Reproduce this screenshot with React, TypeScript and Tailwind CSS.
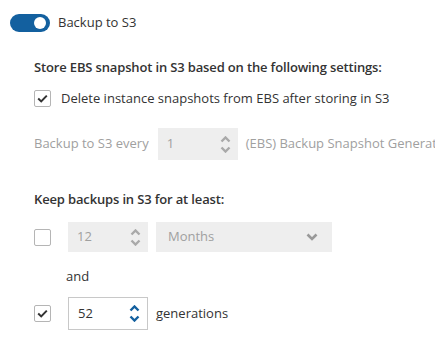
import React from 'react';

const Chevron = ({ dir, className = '' }: { dir: 'up' | 'down'; className?: string }) => (
  <svg width="11" height="7" viewBox="0 0 11 7" className={className} fill="none">
    {dir === 'up' ? (
      <path d="M1.5 5.5 L5.5 1.5 L9.5 5.5" stroke="currentColor" strokeWidth="2.4" />
    ) : (
      <path d="M1.5 1.5 L5.5 5.5 L9.5 1.5" stroke="currentColor" strokeWidth="2.4" />
    )}
  </svg>
);

const Checkbox = ({ checked }: { checked: boolean }) => (
  <div className="w-[17px] h-[17px] border border-[#b5b5b5] rounded-[2px] bg-white flex items-center justify-center flex-shrink-0">
    {checked && (
      <svg width="11" height="9" viewBox="0 0 11 9" fill="none">
        <path d="M1.2 4.6 L4.2 7.4 L9.8 1.6" stroke="#333" strokeWidth="2" />
      </svg>
    )}
  </div>
);

const NumberBox = ({
  value,
  disabled,
  className = '',
}: {
  value: string;
  disabled?: boolean;
  className?: string;
}) => (
  <div
    className={`w-[80px] flex-shrink-0 flex items-center justify-between pl-[9px] pr-[7px] ${
      disabled ? 'bg-[#eeeeee] text-[#a0a0a0]' : 'bg-white border border-[#c8c8c8] text-[#333]'
    } ${className}`}
  >
    <span>{value}</span>
    <div className={`flex flex-col gap-[3px] ${disabled ? 'text-[#a9a9a9]' : 'text-[#13609f]'}`}>
      <Chevron dir="up" />
      <Chevron dir="down" />
    </div>
  </div>
);

export default function App() {
  return (
    <div className="pl-[10px] pt-[14px] text-[13px] text-[#333] font-['Open_Sans',sans-serif] bg-white w-[435px] h-[343px] overflow-hidden">
      <div className="flex items-center h-[18px]">
        <div className="w-[40px] h-[18px] rounded-full bg-[#13609f] flex items-center justify-end pr-[4px]">
          <div className="w-[12px] h-[12px] rounded-full bg-white" />
        </div>
        <span className="ml-[8px]">Backup to S3</span>
      </div>

      <div className="pl-[24px]">
        <div className="mt-[26px] h-[18px] leading-[18px] font-semibold tracking-[-0.15px]">
          Store EBS snapshot in S3 based on the following settings:
        </div>

        <div className="mt-[14px] flex items-center h-[17px]">
          <Checkbox checked />
          <span className="ml-[10px] whitespace-nowrap">
            Delete instance snapshots from EBS after storing in S3
          </span>
        </div>

        <div className="mt-[21px] flex items-center whitespace-nowrap text-[#a0a0a0]">
          <span className="flex-shrink-0">Backup to S3 every</span>
          <NumberBox value="1" disabled className="h-[32px] ml-[9px]" />
          <span className="ml-[8px] flex-shrink-0">(EBS) Backup Snapshot Generations</span>
        </div>

        <div className="mt-[30px] h-[18px] leading-[18px] font-semibold tracking-[-0.15px]">
          Keep backups in S3 for at least:
        </div>

        <div className="mt-[14px] flex items-center">
          <Checkbox checked={false} />
          <NumberBox value="12" disabled className="h-[30px] ml-[17px]" />
          <div className="ml-[8px] w-[176px] h-[30px] bg-[#eeeeee] text-[#a0a0a0] flex items-center justify-between pl-[12px] pr-[14px]">
            <span>Months</span>
            <svg width="12" height="8" viewBox="0 0 12 8" fill="none">
              <path d="M1.5 1.5 L6 6 L10.5 1.5" stroke="#999" strokeWidth="2.6" />
            </svg>
          </div>
        </div>

        <div className="mt-[15px] pl-[32px] h-[18px] leading-[18px]">and</div>

        <div className="mt-[12px] flex items-center">
          <Checkbox checked />
          <NumberBox value="52" className="h-[33px] ml-[17px]" />
          <span className="ml-[8px]">generations</span>
        </div>
      </div>
    </div>
  );
}
